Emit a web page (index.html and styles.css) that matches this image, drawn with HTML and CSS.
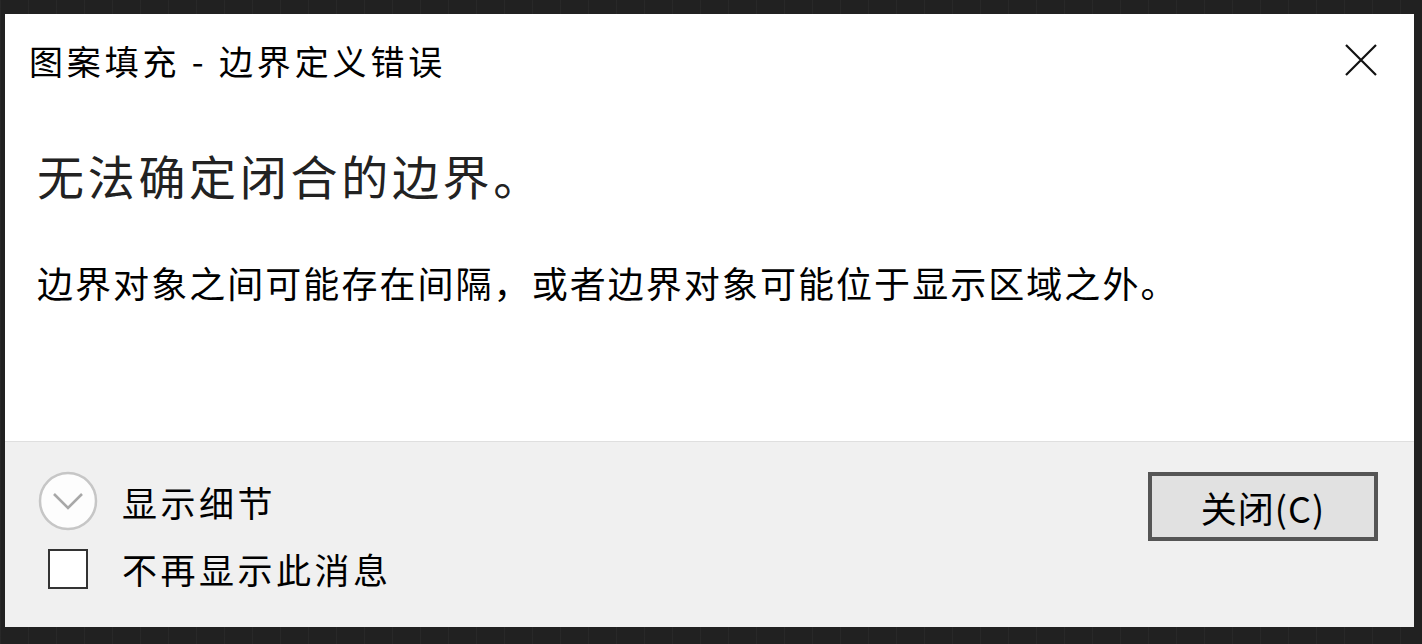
FILE: index.html
```html
<!DOCTYPE html>
<html lang="zh-CN">
<head>
    <meta charset="UTF-8">
    <title>图案填充 - 边界定义错误</title>
    <link rel="stylesheet" href="styles.css">
</head>
<body>
    <div class="dialog">
        <div class="main">
            <div class="title-bar">
                <span class="title">图案填充 - 边界定义错误</span>
                <span class="close-x">
                    <svg width="32" height="32" viewBox="0 0 32 32"><path d="M1 1 L31 31 M31 1 L1 31" stroke="#111" stroke-width="2.2" fill="none"/></svg>
                </span>
            </div>
            <h1 class="heading">无法确定闭合的边界。</h1>
            <p class="message">边界对象之间可能存在间隔，或者边界对象可能位于显示区域之外。</p>
        </div>
        <div class="footer">
            <div class="options">
                <div class="option">
                    <span class="expander">
                        <svg width="60" height="60" viewBox="0 0 60 60">
                            <circle cx="30" cy="30" r="28" fill="#fdfdfd" stroke="#c6c6c6" stroke-width="2.5"/>
                            <path d="M16 23 L30 37 L44 23" stroke="#a8a8a8" stroke-width="2.6" fill="none"/>
                        </svg>
                    </span>
                    <span>显示细节</span>
                </div>
                <div class="option">
                    <span class="check-wrap"><span class="checkbox"></span></span>
                    <span>不再显示此消息</span>
                </div>
            </div>
            <button class="close-btn">关闭(C)</button>
        </div>
    </div>
</body>
</html>
```

FILE: styles.css
```css
* {
    margin: 0;
    padding: 0;
    box-sizing: border-box;
}
body {
    width: 1422px;
    height: 644px;
    padding: 14px 8px 17px 5px;
    background-color: #212121;
    background-image: repeating-linear-gradient(90deg, rgba(255, 255, 255, 0.03) 0 1px, transparent 1px 28px);
    font-family: "Noto Sans CJK SC", "Noto Sans", sans-serif;
    color: #000;
    overflow: hidden;
}
.dialog {
    width: 1409px;
    height: 613px;
    display: flex;
    flex-direction: column;
    background: #fff;
}
.main {
    height: 427px;
    padding: 0 0 0 24px;
}
.title-bar {
    display: flex;
    justify-content: space-between;
    align-items: center;
    height: 92px;
    padding-right: 37px;
}
.title {
    font-size: 34px;
    letter-spacing: 3.85px;
}
.close-x {
    display: flex;
}
.heading {
    font-size: 47px;
    font-weight: 400;
    color: #222;
    margin: 34px 0 0 8px;
    letter-spacing: 3.7px;
    line-height: 70px;
}
.message {
    font-size: 36px;
    letter-spacing: 2.05px;
    margin: 47px 0 0 8px;
    line-height: 50px;
}
.footer {
    flex: 1;
    display: flex;
    justify-content: space-between;
    align-items: flex-start;
    background: #f0f0f0;
    border-top: 1px solid #dfdfdf;
    padding: 29px 36px 0 33px;
}
.options {
    display: flex;
    flex-direction: column;
    gap: 12px;
}
.option {
    display: flex;
    align-items: center;
    gap: 24px;
    font-size: 35px;
    letter-spacing: 3.5px;
}
.expander {
    display: flex;
    width: 60px;
    height: 60px;
}
.check-wrap {
    display: flex;
    justify-content: center;
    width: 60px;
}
.checkbox {
    width: 40px;
    height: 40px;
    border: 2px solid #333;
    background: #fff;
}
.close-btn {
    width: 230px;
    height: 69px;
    margin-top: 1px;
    border: 4px solid #555;
    background: #e1e1e1;
    font-family: inherit;
    font-size: 36px;
    letter-spacing: 1px;
    color: #000;
}
```
